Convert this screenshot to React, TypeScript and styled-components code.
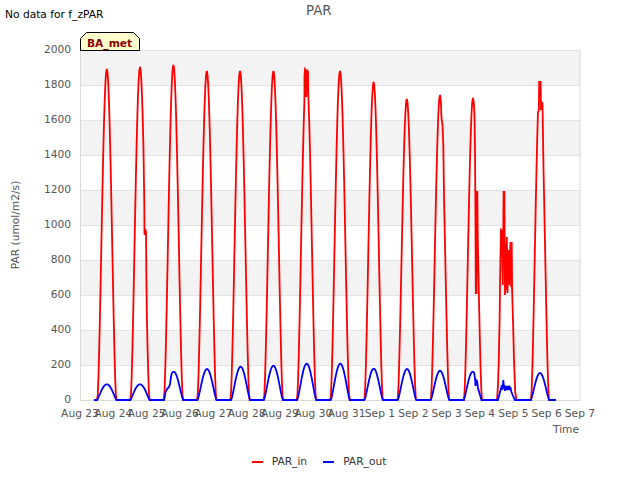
import React from "react";
import styled, { createGlobalStyle } from "styled-components";

const Global = createGlobalStyle`
  html, body { margin: 0; padding: 0; background: #fff; }
  body { font-family: "DejaVu Sans", sans-serif; }
`;

const Page = styled.div`
  width: 640px;
  height: 480px;
  display: flex;
  flex-direction: column;
  overflow: hidden;
  background: #fff;
`;
const Header = styled.header`
  height: 30px;
  display: grid;
  grid-template-columns: 304px auto 1fr;
`;
const Note = styled.div`
  padding: 8px 0 0 5px;
  font-size: 10.67px;
  line-height: 14px;
  color: #000;
`;
const Title = styled.div`
  padding: 3px 0 0 2px;
  font-size: 13.33px;
  line-height: 15px;
  color: #555;
`;
const ChartSvg = styled.svg`
  display: block;
  width: 640px;
  height: 420px;
  flex: none;
`;
const Legend = styled.footer`
  display: flex;
  justify-content: center;
  gap: 16px;
  padding: 5px 2px 0 0;
`;
const LegendItem = styled.div`
  display: flex;
  align-items: center;
  gap: 9px;
  font-size: 10.67px;
  line-height: 14px;
  color: #333;
`;
const Swatch = styled.span<{ $color: string }>`
  width: 11px;
  height: 2px;
  background: ${(p) => p.$color};
`;
const Tick = styled.text`
  font-family: "DejaVu Sans", sans-serif;
  font-size: 10.67px;
  fill: #555;
`;
const AxisLabel = styled.text`
  font-family: "DejaVu Sans", sans-serif;
  font-size: 10.67px;
  fill: #555;
`;
const TagLabel = styled.text`
  font-family: "DejaVu Sans", sans-serif;
  font-size: 10.67px;
  font-weight: 700;
  fill: #8b0000;
`;
const Band = styled.rect`
  fill: #f3f3f3;
`;
const Grid = styled.line`
  stroke: #e2e2e2;
  stroke-width: 1;
`;
const Frame = styled.path`
  fill: none;
  stroke: #d9d9d9;
  stroke-width: 1;
`;
const Series = styled.polyline<{ $color: string }>`
  fill: none;
  stroke: ${(p) => p.$color};
  stroke-width: 1.8;
  stroke-linejoin: miter;
`;
const Tag = styled.path`
  fill: #ffffcc;
  stroke: #000;
  stroke-width: 1;
`;

type Pt = [number, number];
type Patch = { from: number; to: number; pts: Pt[] };

const K = 1.6;

const curve = (c: number, top: number, W: number, k: number, patch?: Patch): Pt[] => {
  const out: Pt[] = [];
  const step = 33.333 / 48;
  const n = Math.ceil(W / step);
  let done = false;
  for (let i = -n; i <= n; i++) {
    const x = c + i * step;
    const d = Math.min(Math.abs(x - c), W);
    const y = 400 - (400 - top) * Math.pow(Math.cos(((Math.PI / 2) * d) / W), k);
    if (patch && x >= patch.from && x <= patch.to) {
      if (!done) {
        out.push(...patch.pts);
        done = true;
      }
      continue;
    }
    out.push([x, y]);
  }
  return out;
};

const join = (segs: Pt[][]) =>
  [[94, 400] as Pt, ...segs.flat(), [556, 400] as Pt]
    .map(([x, y]) => `${x.toFixed(2)},${y.toFixed(2)}`)
    .join(" ");

const redSegs: Pt[][] = [
  curve(106.8, 69, 9.5, K),
  curve(140, 67, 9.5, K, {
    from: 144,
    to: 146.6,
    pts: [[144.3, 205], [144.5, 235], [145.3, 229], [146, 232], [146.4, 280]],
  }),
  curve(173.4, 65, 9.5, K),
  curve(206.8, 71, 9.5, K),
  curve(240, 71, 9.5, K),
  curve(273.4, 71, 9.5, K),
  curve(306.5, 70, 9.5, K, {
    from: 304.5,
    to: 308.6,
    pts: [[304.5, 76], [305, 69], [305.8, 70], [306.2, 97], [306.9, 72], [307.6, 71], [308, 72], [308.3, 96]],
  }),
  curve(340, 71, 9.5, K),
  curve(373.6, 82, 9.2, K),
  curve(406.8, 99, 9.2, K),
  curve(440, 95, 9.2, K, {
    from: 440.8,
    to: 444,
    pts: [[441, 105], [441.5, 118], [442.5, 125], [443.3, 145], [443.8, 180]],
  }),
  curve(473, 98, 9, K, {
    from: 474.8,
    to: 478.2,
    pts: [[475, 150], [475.3, 190], [475.8, 293], [476.5, 293], [476.8, 192], [477.3, 192], [477.8, 240]],
  }),
  [
    [497, 400], [498, 385], [498.8, 360], [499.6, 320], [500.4, 260], [501, 230], [502, 231],
    [502.8, 285], [503.6, 192], [504.4, 192], [505, 295], [505.8, 245], [506.3, 290], [506.8, 237],
    [507.5, 293], [508.3, 250], [509, 285], [509.7, 262], [510.5, 242], [511.1, 287], [511.7, 242],
    [512.1, 290], [513, 320], [514, 360], [515.2, 392], [516.5, 400],
  ],
  curve(540, 82, 9, K, {
    from: 537.4,
    to: 543,
    pts: [[537.6, 125], [538, 112], [538.8, 111], [539.2, 82], [540.6, 82], [541, 110], [541.5, 102], [542.5, 104], [543, 135]],
  }),
];

const blueSegs: Pt[][] = [
  curve(106.8, 384.3, 9.5, 1.1),
  curve(140, 384.3, 9.5, 1.1),
  curve(173.7, 371.7, 9.5, 1.3, {
    from: 164,
    to: 171.4,
    pts: [[164.5, 398], [165.5, 392], [167, 389], [169, 387], [170, 384], [171, 377]],
  }),
  curve(207, 369, 9.5, 1.3),
  curve(240.6, 366.7, 9.5, 1.3),
  curve(273.4, 365.7, 9.5, 1.3),
  curve(306.7, 363.7, 9.5, 1.3),
  curve(340.3, 363.7, 9.5, 1.3),
  curve(373.7, 368.7, 9.2, 1.3),
  curve(407, 369, 9.2, 1.3),
  curve(440, 370.7, 9.2, 1.3),
  curve(472.7, 371.7, 9, 1.3, {
    from: 474.7,
    to: 482,
    pts: [[475, 378], [475.5, 386], [476, 380], [477, 381], [478, 388], [480, 395], [481.5, 400]],
  }),
  [
    [498, 400], [500, 392], [502, 385], [502.5, 390], [503.3, 380], [504, 388], [504.5, 385],
    [505, 391], [505.7, 386], [506.3, 390], [507, 386], [507.7, 390], [508.4, 386], [509, 390],
    [509.8, 387], [510.5, 388], [511.5, 392], [513, 396], [515, 400],
  ],
  curve(540, 373, 9.2, 1.3),
];

const xLabels = [
  "Aug 23", "Aug 24", "Aug 25", "Aug 26", "Aug 27", "Aug 28", "Aug 29", "Aug 30",
  "Aug 31", "Sep 1", "Sep 2", "Sep 3", "Sep 4", "Sep 5", "Sep 6", "Sep 7",
];
const yValues = [0, 200, 400, 600, 800, 1000, 1200, 1400, 1600, 1800, 2000];
const bands = [50, 120, 190, 260, 330];

export default function App() {
  return (
    <Page>
      <Global />
      <Header>
        <Note>No data for f_zPAR</Note>
        <Title>PAR</Title>
        <span />
      </Header>
      <ChartSvg viewBox="0 30 640 420">
        {bands.map((y) => (
          <Band key={y} x={80} y={y} width={500} height={35} />
        ))}
        {yValues.map((v) => {
          const y = 400 - v * 0.175 + 0.5;
          return <Grid key={v} x1={80} x2={580} y1={y} y2={y} />;
        })}
        <Frame d="M80.5 50V400.5H580V50" />
        {yValues.map((v) => (
          <Tick key={v} x={71} y={403 - v * 0.175} textAnchor="end">
            {v}
          </Tick>
        ))}
        {xLabels.map((l, i) => (
          <Tick key={l} x={80 + (i * 500) / 15} y={417} textAnchor="middle">
            {l}
          </Tick>
        ))}
        <AxisLabel x={566} y={433} textAnchor="middle">
          Time
        </AxisLabel>
        <AxisLabel transform="translate(19 225) rotate(-90)" textAnchor="middle">
          PAR (umol/m2/s)
        </AxisLabel>
        <Series $color="#ff0000" points={join(redSegs)} />
        <Series $color="#0000ff" points={join(blueSegs)} />
        <Tag d="M80.5 50.5V38.5L86.5 32.5H133.5L139.5 38.5V50.5Z" />
        <TagLabel x={87} y={47}>
          BA_met
        </TagLabel>
      </ChartSvg>
      <Legend>
        <LegendItem>
          <Swatch $color="#ff0000" />
          PAR_in
        </LegendItem>
        <LegendItem>
          <Swatch $color="#0000ff" />
          PAR_out
        </LegendItem>
      </Legend>
    </Page>
  );
}
